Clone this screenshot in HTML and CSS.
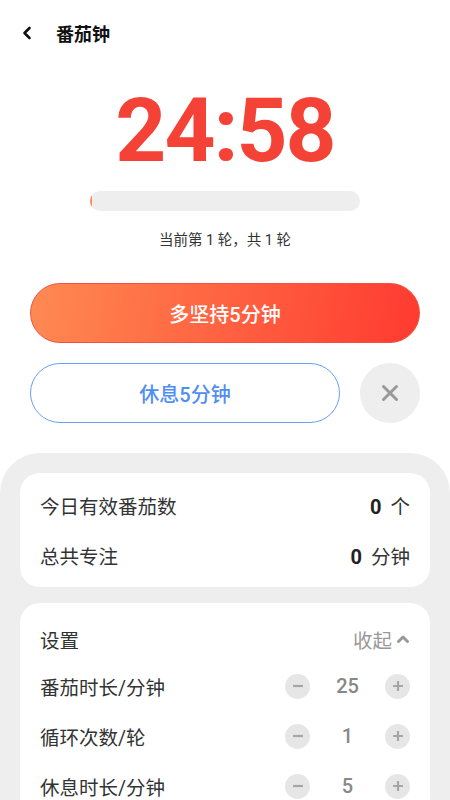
FILE: index.html
```html
<!DOCTYPE html>
<html lang="zh-CN">
<head>
    <meta charset="UTF-8">
    <meta name="viewport" content="width=device-width, initial-scale=1.0">
    <title>番茄钟</title>
    <link rel="stylesheet" href="styles.css">
</head>
<body>
    <!-- Top bar -->
    <div class="topbar">
        <span class="back">
            <svg width="12" height="14" viewBox="0 0 12 14"><path d="M8.5 2 L3.5 7 L8.5 12" fill="none" stroke="#111" stroke-width="2.6" stroke-linecap="round" stroke-linejoin="round"/></svg>
        </span>
        <span class="title">番茄钟</span>
    </div>

    <!-- Timer -->
    <div class="timer">24:58</div>
    <div class="progress">
        <div class="progress-fill" style="width: 0.6%"></div>
    </div>
    <div class="round">当前第 1 轮，共 1 轮</div>

    <!-- Actions -->
    <div class="actions">
        <button class="btn-main">多坚持5分钟</button>
        <div class="action-row">
            <button class="btn-rest">休息5分钟</button>
            <button class="btn-close">
                <svg width="18" height="18" viewBox="0 0 18 18"><path d="M2.5 2.5 L15.5 15.5 M15.5 2.5 L2.5 15.5" stroke="#999" stroke-width="3" stroke-linecap="round"/></svg>
            </button>
        </div>
    </div>

    <!-- Stats and settings -->
    <div class="panel">
        <div class="card stats">
            <div class="row">
                <span class="label">今日有效番茄数</span>
                <span class="stat"><b>0</b><span class="unit">个</span></span>
            </div>
            <div class="row">
                <span class="label">总共专注</span>
                <span class="stat"><b>0</b><span class="unit">分钟</span></span>
            </div>
        </div>

        <div class="card settings">
            <div class="settings-head">
                <span class="label">设置</span>
                <span class="collapse">收起
                    <svg width="14" height="10" viewBox="0 0 14 10"><path d="M2.5 7.5 L7 3 L11.5 7.5" fill="none" stroke="#999" stroke-width="3" stroke-linecap="round" stroke-linejoin="round"/></svg>
                </span>
            </div>
            <div class="row">
                <span class="label">番茄时长/分钟</span>
                <div class="stepper">
                    <span class="step">
                        <svg width="12" height="12" viewBox="0 0 12 12"><path d="M1 6 H11" stroke="#a6a6a6" stroke-width="2.2"/></svg>
                    </span>
                    <span class="value">25</span>
                    <span class="step">
                        <svg width="12" height="12" viewBox="0 0 12 12"><path d="M1 6 H11 M6 1 V11" stroke="#a6a6a6" stroke-width="2.2"/></svg>
                    </span>
                </div>
            </div>
            <div class="row">
                <span class="label">循环次数/轮</span>
                <div class="stepper">
                    <span class="step">
                        <svg width="12" height="12" viewBox="0 0 12 12"><path d="M1 6 H11" stroke="#a6a6a6" stroke-width="2.2"/></svg>
                    </span>
                    <span class="value">1</span>
                    <span class="step">
                        <svg width="12" height="12" viewBox="0 0 12 12"><path d="M1 6 H11 M6 1 V11" stroke="#a6a6a6" stroke-width="2.2"/></svg>
                    </span>
                </div>
            </div>
            <div class="row">
                <span class="label">休息时长/分钟</span>
                <div class="stepper">
                    <span class="step">
                        <svg width="12" height="12" viewBox="0 0 12 12"><path d="M1 6 H11" stroke="#a6a6a6" stroke-width="2.2"/></svg>
                    </span>
                    <span class="value">5</span>
                    <span class="step">
                        <svg width="12" height="12" viewBox="0 0 12 12"><path d="M1 6 H11 M6 1 V11" stroke="#a6a6a6" stroke-width="2.2"/></svg>
                    </span>
                </div>
            </div>
        </div>
    </div>
</body>
</html>
```

FILE: styles.css
```css
/* General */
body {
    margin: 0;
    background: #fff;
    font-family: Roboto, "Noto Sans CJK SC", sans-serif;
    color: #333;
}

/* Top bar */
.topbar {
    height: 66px;
    display: flex;
    align-items: center;
    padding-left: 21px;
}

.back {
    display: flex;
    width: 35px;
}

.title {
    font-size: 18px;
    font-weight: bold;
    color: #111;
}

/* Timer */
.timer {
    margin-top: 20px;
    font-size: 89px;
    line-height: 90px;
    font-weight: bold;
    letter-spacing: -2px;
    color: #f44336;
    text-align: center;
}

.progress {
    width: 270px;
    height: 20px;
    margin: 15px auto 0;
    background: #eee;
    border-radius: 10px;
    overflow: hidden;
}

.progress-fill {
    height: 100%;
    background: #ff8a50;
}

.round {
    margin-top: 20px;
    font-size: 14.5px;
    line-height: 20px;
    text-align: center;
    color: #333;
}

/* Buttons */
.actions {
    margin-top: 32px;
    padding: 0 30px;
}

button {
    font-family: inherit;
    cursor: pointer;
}

.btn-main {
    width: 100%;
    height: 60px;
    border: 1px solid #ef5240;
    border-radius: 30px;
    background: linear-gradient(100deg, #ff8a52, #ff3a30);
    color: #fff;
    font-size: 20px;
    font-weight: 500;
}

.action-row {
    display: flex;
    gap: 20px;
    margin-top: 20px;
}

.btn-rest {
    flex: 1;
    height: 60px;
    border: 1px solid #6a9ff0;
    border-radius: 30px;
    background: #fff;
    color: #4f8ef2;
    font-size: 20px;
    font-weight: 500;
}

.btn-close {
    width: 60px;
    height: 60px;
    border: none;
    border-radius: 50%;
    background: #eee;
    display: flex;
    align-items: center;
    justify-content: center;
    padding: 0;
}

/* Bottom panel */
.panel {
    margin-top: 30px;
    background: #eee;
    border-radius: 40px 40px 0 0;
    padding: 20px 20px 20px;
}

.card {
    background: #fff;
    border-radius: 20px;
    padding: 7px 20px;
}

.card + .card {
    margin-top: 16px;
}

.row {
    height: 50px;
    display: flex;
    align-items: center;
    justify-content: space-between;
}

.label {
    font-size: 19.5px;
    color: #333;
}

.stat b {
    font-size: 20px;
    color: #222;
}

.unit {
    margin-left: 9px;
    font-size: 19.5px;
    color: #333;
}

/* Settings */
.settings {
    padding-top: 14px;
}

.settings-head {
    height: 44px;
    display: flex;
    align-items: center;
    justify-content: space-between;
}

.collapse {
    font-size: 19.5px;
    color: #999;
    display: flex;
    align-items: center;
    gap: 4px;
}

.stepper {
    display: flex;
    align-items: center;
}

.step {
    width: 25px;
    height: 25px;
    border-radius: 50%;
    background: #e6e6e6;
    display: flex;
    align-items: center;
    justify-content: center;
}

.value {
    width: 75px;
    text-align: center;
    font-size: 20px;
    font-weight: 500;
    color: #888;
}
```
